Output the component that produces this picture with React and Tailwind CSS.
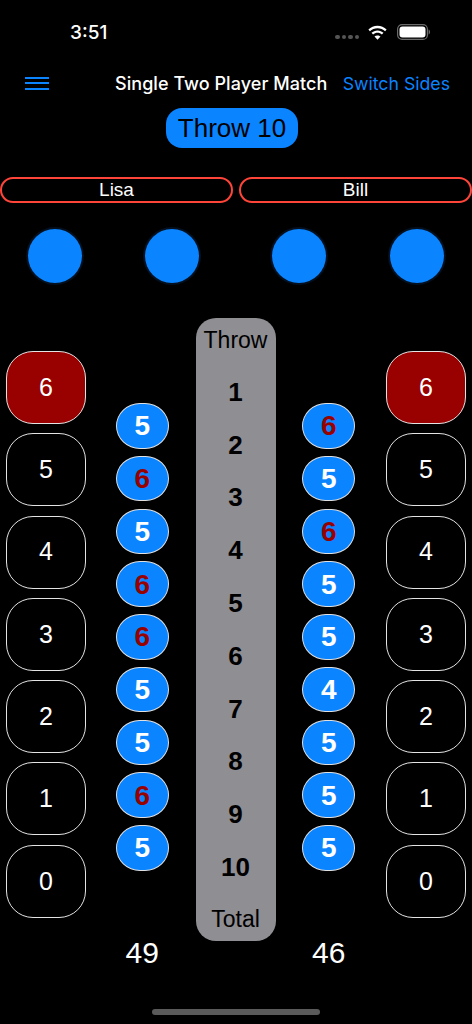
const SCORES = [6, 5, 4, 3, 2, 1, 0];
const LEFT = [5, 6, 5, 6, 6, 5, 5, 6, 5];
const RIGHT = [6, 5, 6, 5, 5, 4, 5, 5, 5];
const THROWS = [1, 2, 3, 4, 5, 6, 7, 8, 9, 10];

function ScoreColumn() {
  return (
    <div className="flex w-[80px] flex-col gap-[9.3px] pt-[33px]">
      {SCORES.map((s, i) => (
        <div
          key={s}
          className={`flex h-[73px] items-center justify-center rounded-[27px] border border-[#e4e4e4] text-[25px] text-white ${i === 0 ? "bg-[#990000]" : "bg-black"}`}
        >
          {s}
        </div>
      ))}
    </div>
  );
}

function ThrowColumn({ values, total, className }) {
  return (
    <div className={`flex w-[54px] flex-col items-center gap-[7.25px] pt-[85px] ${className}`}>
      {values.map((v, i) => (
        <div
          key={i}
          className={`flex h-[45.5px] w-[53px] items-center justify-center rounded-[24px/23px] border border-[#e0e0e0] bg-[#0a84ff] pt-[1px] text-[28px] font-bold ${v === 6 ? "text-[#990000]" : "text-white"}`}
        >
          {v}
        </div>
      ))}
      <div className="mt-[52px] h-[46px] text-[30px] leading-[46px] text-white">{total}</div>
    </div>
  );
}

function Dot() {
  return <div className="h-[54px] w-[54px] rounded-full bg-[#0a84ff] shadow-[0_0_0_2px_#04101f]" />;
}

export default function App() {
  return (
    <div className="relative flex h-[1024px] w-[472px] flex-col overflow-hidden bg-black font-['Liberation_Sans',sans-serif] text-white">
      {/* status bar */}
      <div className="flex h-[64px] items-center justify-between pl-[70px] pr-[42px] font-['Inter',sans-serif]">
        <span className="text-[19px] font-medium leading-none">3:51</span>
        <div className="flex items-center">
          <div className="mr-[8px] mt-[10px] flex gap-[2px]">
            <span className="h-[4px] w-[4.5px] rounded-full bg-[#555]" />
            <span className="h-[4px] w-[4.5px] rounded-full bg-[#555]" />
            <span className="h-[4px] w-[4.5px] rounded-full bg-[#555]" />
            <span className="h-[4px] w-[4.5px] rounded-full bg-[#555]" />
          </div>
          <svg width="21" height="15" viewBox="0 0 21 15" fill="white" className="mr-[9px]">
            <path d="M10.5 3.2c2.9 0 5.6 1.1 7.6 3l1.5-1.6C17.2 2.2 14 .8 10.5.8S3.8 2.2 1.4 4.6l1.5 1.6c2-1.9 4.7-3 7.6-3z" />
            <path d="M10.5 7.7c1.7 0 3.2.6 4.4 1.7l1.6-1.6c-1.6-1.5-3.7-2.4-6-2.4s-4.4.9-6 2.4l1.6 1.6c1.2-1.1 2.7-1.7 4.4-1.7z" />
            <path d="M10.5 14.8l3-3.2c-.8-.7-1.8-1.2-3-1.2s-2.2.5-3 1.2z" />
          </svg>
          <svg width="33" height="16" viewBox="0 0 33 16">
            <rect x="0.6" y="0.6" width="29.8" height="14.8" rx="4.5" fill="none" stroke="#6b6b6b" strokeWidth="1.2" />
            <rect x="2.5" y="2.5" width="26" height="11" rx="3" fill="white" />
            <path d="M31.6 5.5c.9.3 1.4 1.3 1.4 2.5s-.5 2.2-1.4 2.5z" fill="#6b6b6b" />
          </svg>
        </div>
      </div>

      {/* navigation bar */}
      <div className="flex h-[38px] items-center pl-[25px] pr-[22px] font-['Inter',sans-serif]">
        <div className="flex w-[24px] flex-col gap-[3.5px]">
          <span className="h-[2px] bg-[#0a84ff]" />
          <span className="h-[2px] bg-[#0a84ff]" />
          <span className="h-[2px] bg-[#0a84ff]" />
        </div>
        <span className="ml-[66px] text-[18px] font-medium tracking-[0.05px]">Single Two Player Match</span>
        <span className="ml-auto pt-[3px] text-[17.7px] text-[#0a84ff]">Switch Sides</span>
      </div>

      {/* current throw */}
      <div className="mt-[6px] flex justify-center pr-[8px]">
        <div className="flex h-[40px] w-[132px] items-center justify-center rounded-[16px] bg-[#0a84ff] text-[26px] text-black">
          Throw 10
        </div>
      </div>

      {/* player names */}
      <div className="mt-[29px] flex justify-between">
        <div className="flex h-[26px] w-[233px] items-center justify-center rounded-[13px] border-2 border-[#ff453a] pt-[1px] text-[19px]">Lisa</div>
        <div className="flex h-[26px] w-[233px] items-center justify-center rounded-[13px] border-2 border-[#ff453a] pt-[1px] text-[19px]">Bill</div>
      </div>

      {/* indicators */}
      <div className="mt-[26px] flex pl-[28px]">
        <Dot />
        <div className="ml-[63px]"><Dot /></div>
        <div className="ml-[73px]"><Dot /></div>
        <div className="ml-[64px]"><Dot /></div>
      </div>

      {/* board */}
      <div className="mt-[35px] flex items-start justify-between px-[6px]">
        <ScoreColumn />
        <ThrowColumn values={LEFT} total={49} className="ml-[3px]" />
        <div className="flex h-[623px] w-[80px] flex-col items-center rounded-[20px] bg-[#8e8e93] text-black">
          <div className="mt-[7px] h-[30px] text-[23px] leading-[30px]">Throw</div>
          <div className="mt-[11px] flex flex-col items-center">
            {THROWS.map((t) => (
              <div key={t} className="flex h-[52.8px] items-center text-[26px] font-bold">{t}</div>
            ))}
          </div>
          <div className="mt-[10px] text-[23px] leading-[30px]">Total</div>
        </div>
        <ThrowColumn values={RIGHT} total={46} className="mr-[4px]" />
        <ScoreColumn />
      </div>

      {/* home indicator */}
      <div className="absolute bottom-[9px] left-[152px] h-[6px] w-[168px] rounded-full bg-[#5a5a5a]" />
    </div>
  );
}
